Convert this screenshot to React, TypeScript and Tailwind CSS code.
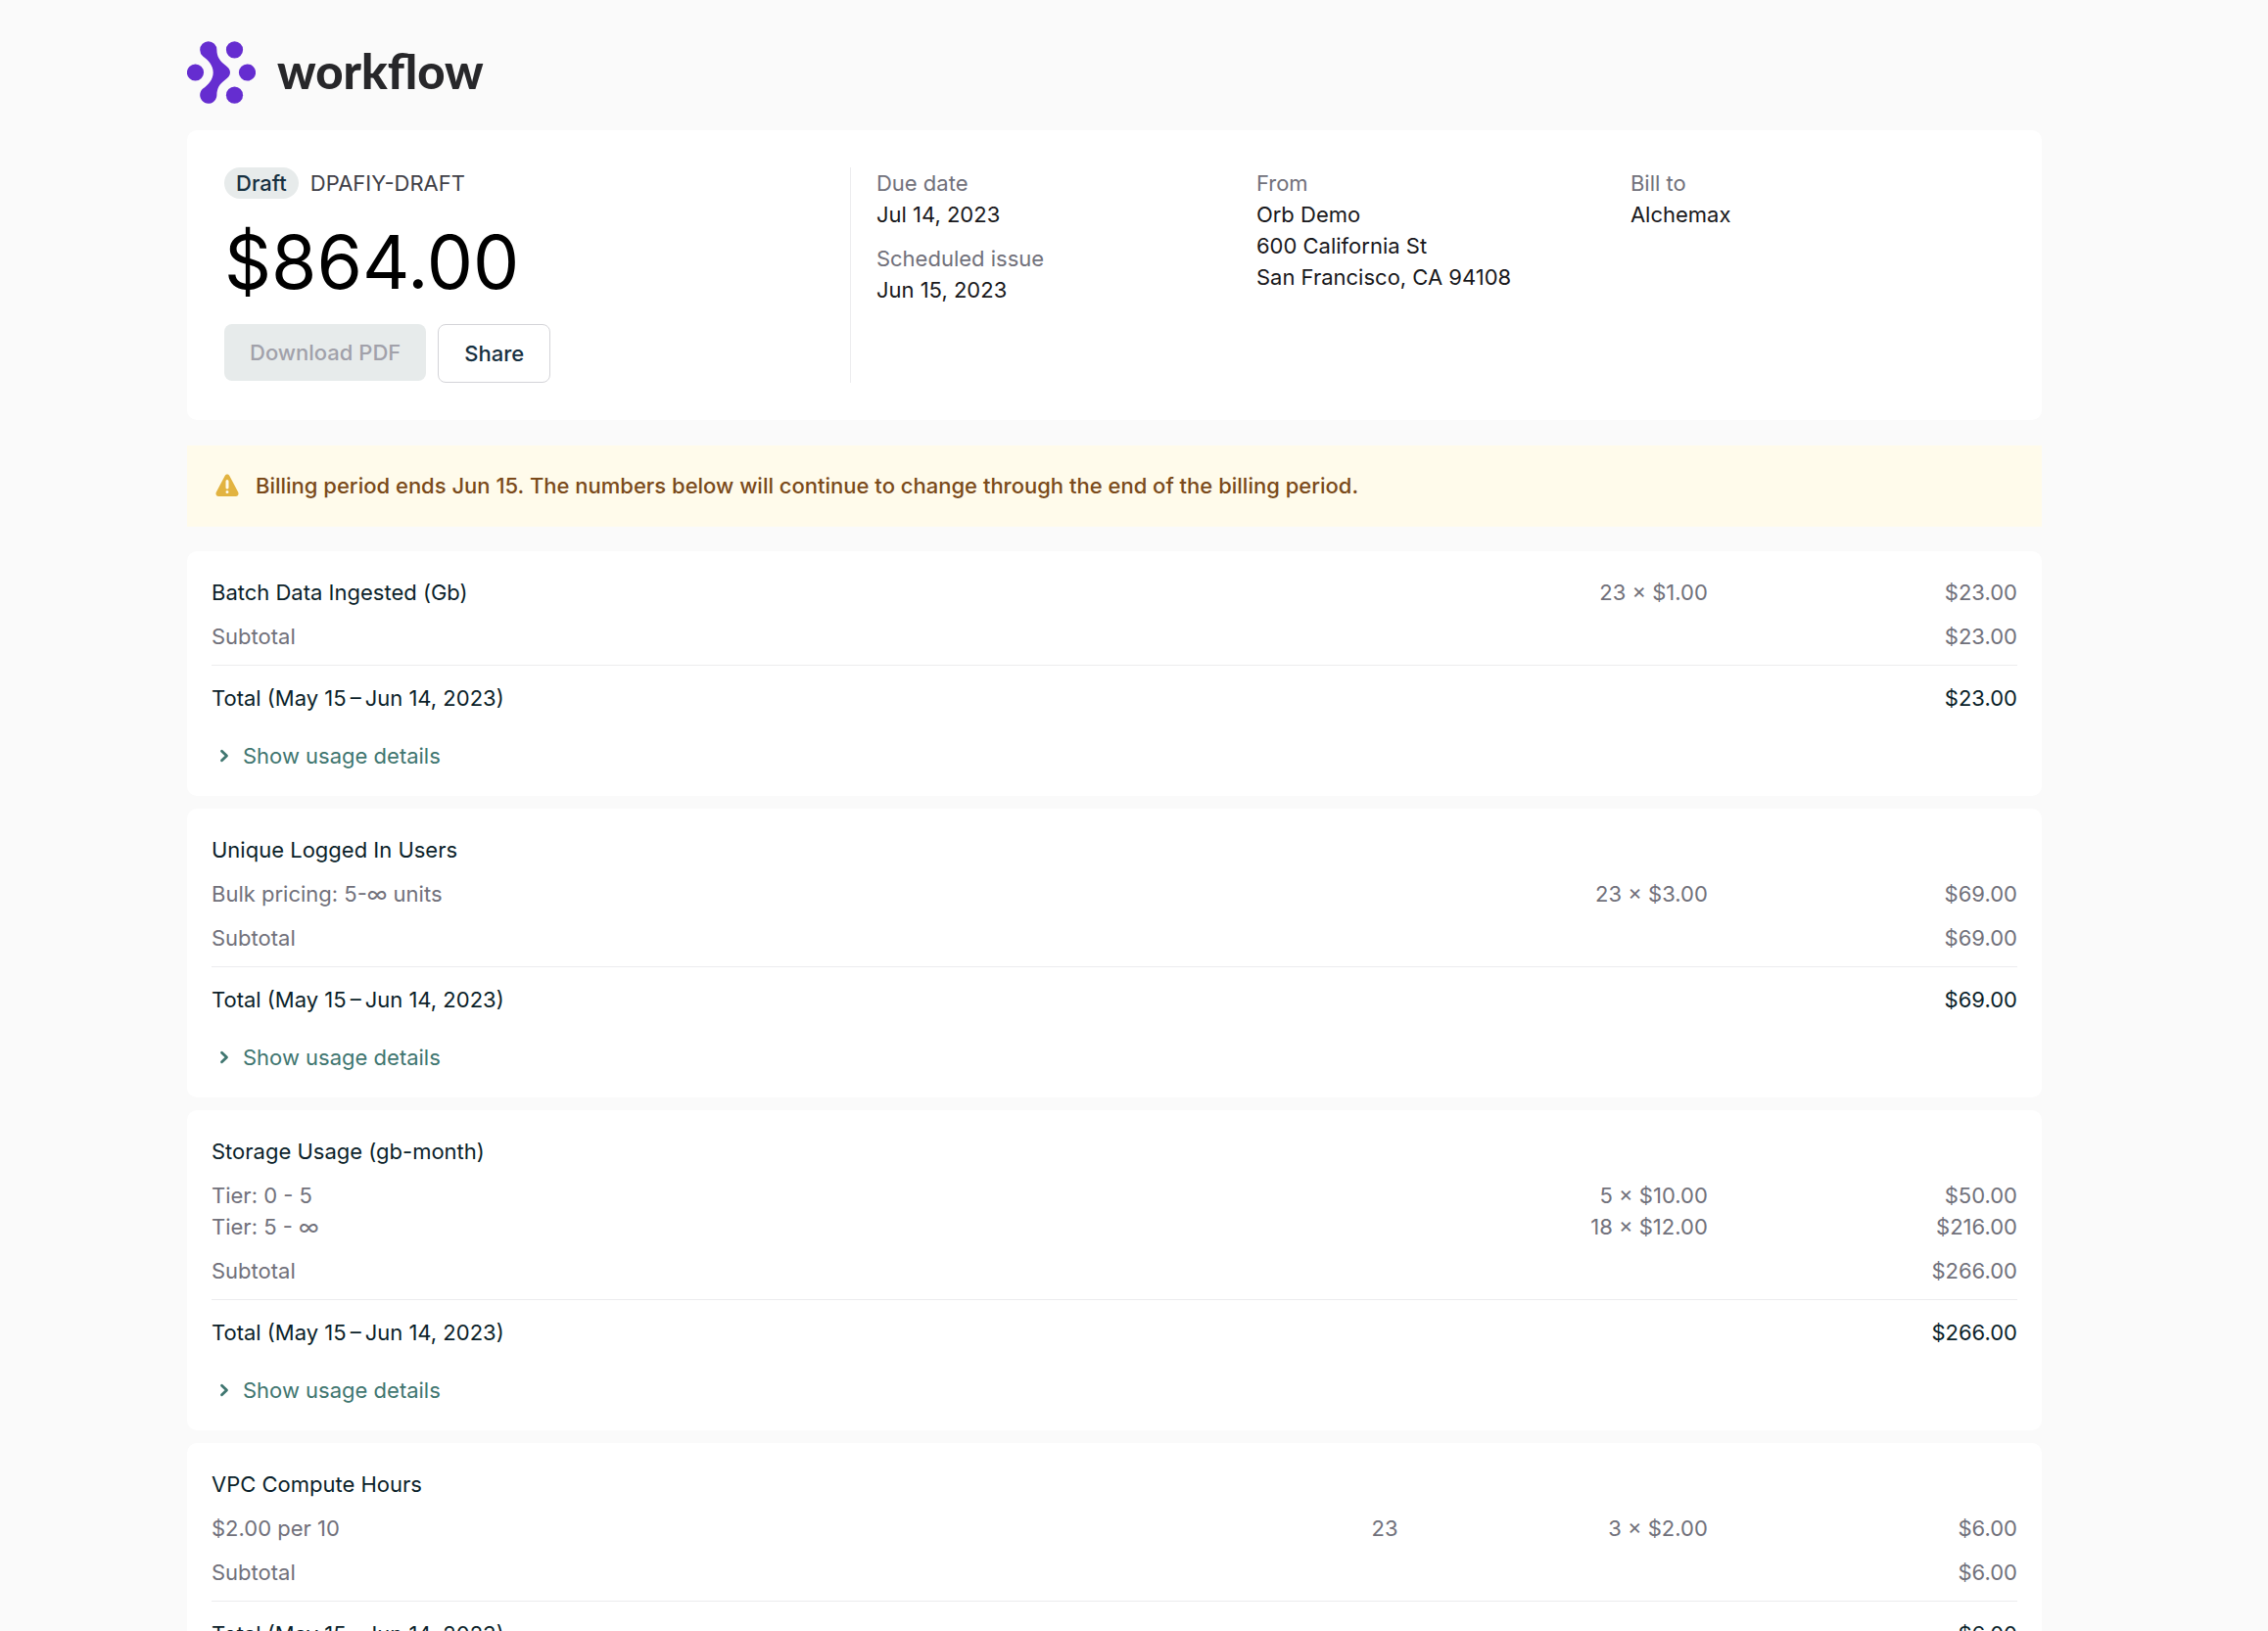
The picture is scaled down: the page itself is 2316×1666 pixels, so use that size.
import React from "react";

type Line = { label: string; units?: string; price?: string; amount: string };
type Charge = {
  name: string;
  price?: string;
  amount?: string;
  lines: Line[];
  total: string;
};

const charges: Charge[] = [
  { name: "Batch Data Ingested (Gb)", price: "23 × $1.00", amount: "$23.00", lines: [], total: "$23.00" },
  {
    name: "Unique Logged In Users",
    lines: [{ label: "Bulk pricing: 5-∞ units", price: "23 × $3.00", amount: "$69.00" }],
    total: "$69.00",
  },
  {
    name: "Storage Usage (gb-month)",
    lines: [
      { label: "Tier: 0 - 5", price: "5 × $10.00", amount: "$50.00" },
      { label: "Tier: 5 - ∞", price: "18 × $12.00", amount: "$216.00" },
    ],
    total: "$266.00",
  },
  {
    name: "VPC Compute Hours",
    lines: [{ label: "$2.00 per 10", units: "23", price: "3 × $2.00", amount: "$6.00" }],
    total: "$6.00",
  },
];

function Logo() {
  return (
    <div className="flex items-start gap-[22px]">
      <svg viewBox="0 0 70 64" className="h-16 w-[70px]" fill="#652dd0" aria-hidden="true">
        <circle cx="8.5" cy="32" r="8.6" />
        <circle cx="48.5" cy="8.8" r="8.6" />
        <circle cx="61.5" cy="32" r="8.6" />
        <circle cx="48.5" cy="55.2" r="8.6" />
        <path d="M13.2 8.8a8.6 8.6 0 0 1 17.2 0c0 7 3 11.500 8 15.200 3.500 2.600 5.600 5 5.600 8s-2.100 5.400-5.600 8c-5 3.700-8 8.200-8 15.200a8.600 8.600 0 1 1-14.200-6.600c5-3.600 10.500-9 10.500-16.600s-5.500-13-10.500-16.600a8.600 8.600 0 0 1-3-6.600z" />
      </svg>
      <span className="font-['Lato',sans-serif] text-[49px] leading-[60px] font-black text-[#27272a]">workflow</span>
    </div>
  );
}

function Field({ label, lines }: { label: string; lines: string[] }) {
  return (
    <div>
      <dt className="text-zinc-500">{label}</dt>
      {lines.map((l) => (
        <dd key={l} className="text-zinc-900">
          {l}
        </dd>
      ))}
    </div>
  );
}

function ChargeCard({ charge }: { charge: Charge }) {
  return (
    <section className="rounded-[10px] bg-white px-[25px] pt-[26px] pb-[25px]">
      <table className="w-full table-fixed border-collapse text-right text-zinc-500">
        <colgroup>
          <col />
          <col className="w-[17.15%]" />
          <col className="w-[17.15%]" />
          <col className="w-[17.15%]" />
        </colgroup>
        <tbody>
          <tr>
            <th scope="row" className="pb-[13px] text-left font-normal text-[#0b1f2a]">
              {charge.name}
            </th>
            <td />
            <td className="pb-[13px]">{charge.price}</td>
            <td className="pb-[13px]">{charge.amount}</td>
          </tr>
          {charge.lines.map((l, i) => {
            const gap = i === charge.lines.length - 1 ? "pb-[13px]" : "pb-0";
            return (
              <tr key={l.label}>
                <th scope="row" className={`${gap} text-left font-normal`}>
                  {l.label}
                </th>
                <td className={gap}>{l.units}</td>
                <td className={gap}>{l.price}</td>
                <td className={gap}>{l.amount}</td>
              </tr>
            );
          })}
          <tr>
            <th scope="row" className="pb-[13px] text-left font-normal">
              Subtotal
            </th>
            <td />
            <td />
            <td className="pb-[13px]">{charge.total}</td>
          </tr>
        </tbody>
        <tfoot>
          <tr className="border-t border-[#ececee] text-[#0b1f2a]">
            <th scope="row" className="pt-[17px] text-left font-normal">
              Total (May 15{"\u2009"}–{"\u2009"}Jun 14, 2023)
            </th>
            <td />
            <td />
            <td className="pt-[17px]">{charge.total}</td>
          </tr>
        </tfoot>
      </table>
      <button type="button" className="mt-[27px] flex items-center gap-3 pl-1.5 text-[#3f7670]">
        <svg viewBox="0 0 14 14" className="size-3.5" fill="none" stroke="currentColor" strokeWidth="2.800" strokeLinecap="round" strokeLinejoin="round" aria-hidden="true">
          <path d="M4.500 2.200l5 4.800-5 4.800" />
        </svg>
        Show usage details
      </button>
    </section>
  );
}

export default function App() {
  return (
    <main className="min-h-screen bg-[#fafafa] pt-[42px] pr-[231px] pl-[191px] font-['Inter',sans-serif] text-[22px] leading-8">
      <Logo />
      <section className="mt-[27px] flex rounded-[10px] bg-white p-[38px]">
        <div className="w-[35.200%] border-r border-[#ececee]">
          <div className="flex items-center gap-3">
            <span className="rounded-full bg-[#e7ebeb] px-3 font-medium text-[#163040]">Draft</span>
            <span className="text-zinc-700">DPAFIY-DRAFT</span>
          </div>
          <h1 className="mt-[27px] text-[75px] leading-[76px] text-black">$864.00</h1>
          <div className="mt-[25px] flex items-start gap-3">
            <button type="button" disabled className="rounded-lg bg-[#e7ebeb] px-[26px] py-[13px] font-medium text-[#a1a1aa]">
              Download PDF
            </button>
            <button type="button" className="rounded-lg border border-zinc-300 bg-white px-[26px] py-[13px] font-medium text-[#163040]">
              Share
            </button>
          </div>
        </div>
        <dl className="grid flex-1 grid-cols-[388px_382px_1fr] pl-[26px]">
          <div className="flex flex-col gap-[13px]">
            <Field label="Due date" lines={["Jul 14, 2023"]} />
            <Field label="Scheduled issue" lines={["Jun 15, 2023"]} />
          </div>
          <Field label="From" lines={["Orb Demo", "600 California St", "San Francisco, CA 94108"]} />
          <Field label="Bill to" lines={["Alchemax"]} />
        </dl>
      </section>
      <div role="alert" className="mt-[26px] flex items-center gap-[17px] bg-[#fffbeb] px-[29px] pt-[25px] pb-[26px] font-medium text-[#7a4a1a]">
        <svg viewBox="0 0 24 24" className="size-6" fill="#e2b340" aria-hidden="true">
          <path d="M9.800 1.800c1-1.700 3.400-1.700 4.400 0l9 17c1 1.800-.3 4.200-2.300 4.200H3.100C1.100 23-.2 20.600.8 18.800z" />
          <path d="M12 7.500v6.500M12 18.500v.1" stroke="#fffbeb" strokeWidth="3" strokeLinecap="round" />
        </svg>
        <p>Billing period ends Jun 15. The numbers below will continue to change through the end of the billing period.</p>
      </div>
      <div className="mt-[25px] flex flex-col gap-[13px]">
        {charges.map((c) => (
          <ChargeCard key={c.name} charge={c} />
        ))}
      </div>
    </main>
  );
}
